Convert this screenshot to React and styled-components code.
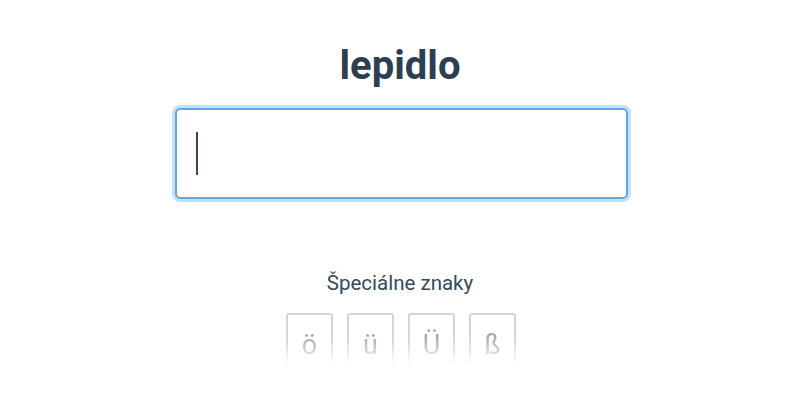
import React from "react";
import styled, { createGlobalStyle } from "styled-components";

const Global = createGlobalStyle`
  html, body { margin: 0; padding: 0; background: #fff; }
  body { font-family: Roboto, "Liberation Sans", sans-serif; }
`;

const Page = styled.div`
  display: flex;
  flex-direction: column;
  align-items: center;
  padding-top: 42px;
`;

const Title = styled.h1`
  margin: 0;
  font-family: Roboto, sans-serif;
  font-weight: 700;
  font-size: 40px;
  line-height: 47px;
  color: #2c3e50;
`;

const Field = styled.div`
  margin: 19px 0 0 3px;
  box-sizing: border-box;
  width: 453px;
  height: 91px;
  border: 2px solid #5aa9e6;
  border-radius: 5px;
  box-shadow: 0 0 0 3px #c6e0f6;
  display: flex;
  align-items: center;
  padding-left: 19px;
`;

const Caret = styled.span`
  display: block;
  width: 2px;
  height: 43px;
  background: #3a4556;
`;

const Label = styled.div`
  margin-top: 72px;
  font-size: 20.5px;
  line-height: 24px;
  color: #34495e;
`;

const Keys = styled.div`
  margin: 18px 0 0 2px;
  display: flex;
  gap: 14px;
  height: 52px;
  overflow: hidden;
  -webkit-mask-image: linear-gradient(to bottom, #000 45%, transparent 100%);
  mask-image: linear-gradient(to bottom, #000 45%, transparent 100%);
`;

const Key = styled.button`
  box-sizing: border-box;
  width: 47px;
  height: 60px;
  border: 2px solid #d4d4d4;
  border-radius: 3px;
  background: #fff;
  color: #a9a9a9;
  font-family: Roboto, sans-serif;
  font-size: 27px;
  padding: 14px 0 0;
  display: flex;
  justify-content: center;
  align-items: flex-start;
  cursor: pointer;
`;

export default function App() {
  return (
    <>
      <Global />
      <Page>
        <Title>lepidlo</Title>
        <Field>
          <Caret />
        </Field>
        <Label>Špeciálne znaky</Label>
        <Keys>
          {["ö", "ü", "Ü", "ß"].map((c) => (
            <Key key={c}>{c}</Key>
          ))}
        </Keys>
      </Page>
    </>
  );
}
